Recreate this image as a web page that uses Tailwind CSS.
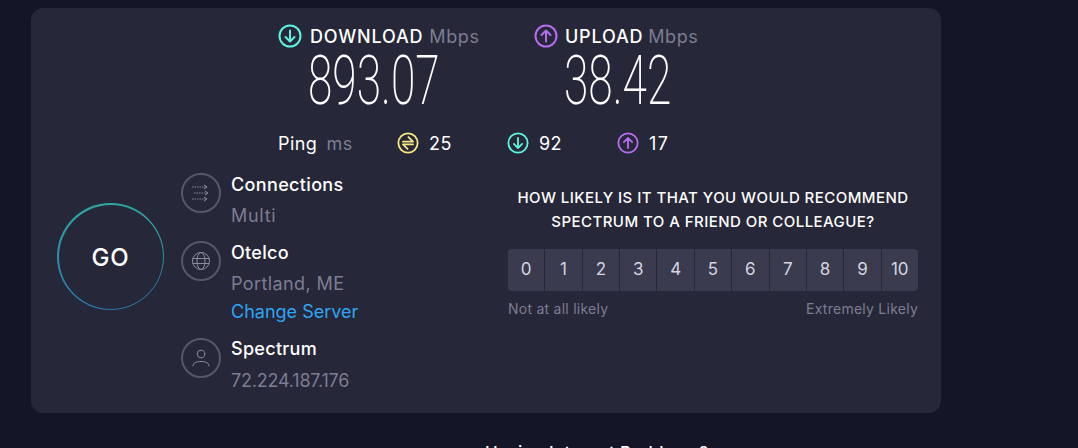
<!DOCTYPE html>
<html lang="en">
  <head>
    <meta charset="UTF-8" />
    <title>Speedtest Result</title>
    <script src="https://cdn.jsdelivr.net/npm/@tailwindcss/browser@4"></script>
  </head>
  <body class="bg-[#141526] h-[448px] overflow-hidden font-['Inter',sans-serif] text-white">
    <main class="w-[910px] h-[405px] ml-[31px] mt-[8px] absolute rounded-xl bg-[#262738]">
      <!-- top: speeds -->
      <section class="pl-[247px] pt-[16px]">
        <div class="flex">
          <div class="w-[256px]">
            <div class="flex items-center h-[24px] text-[18px] font-medium">
              <svg class="w-[24px] h-[24px] mr-[8px] text-[#5ef2e0]" viewBox="0 0 24 24" fill="none" stroke="currentColor" stroke-width="2" stroke-linecap="round" stroke-linejoin="round"><circle cx="12" cy="12" r="10.5" /><path d="M12 6.500v11M7.500 13l4.500 4.500 4.500-4.500" /></svg>
              <span class="tracking-[0.8px]">DOWNLOAD</span><span class="ml-[6px] font-normal tracking-[0.6px] text-[#7c7d92]">Mbps</span>
            </div>
            <div class="font-['Roboto',sans-serif] font-extralight text-[68px] leading-[60px] origin-left scale-x-[0.65] ml-[30px] mt-[3px]">893.07</div>
          </div>
          <div>
            <div class="flex items-center h-[24px] text-[18px] font-medium">
              <svg class="w-[24px] h-[24px] mr-[7px] text-[#b56cf0]" viewBox="0 0 24 24" fill="none" stroke="currentColor" stroke-width="2" stroke-linecap="round" stroke-linejoin="round"><circle cx="12" cy="12" r="10.5" /><path d="M12 17.500v-11M7.500 11L12 6.500l4.500 4.500" /></svg>
              <span class="tracking-[0.8px]">UPLOAD</span><span class="ml-[5px] font-normal tracking-[0.6px] text-[#7c7d92]">Mbps</span>
            </div>
            <div class="font-['Roboto',sans-serif] font-extralight text-[68px] leading-[60px] origin-left scale-x-[0.65] ml-[30px] mt-[3px]">38.42</div>
          </div>
        </div>
        <div class="flex items-center h-[24px] mt-[20px] text-[18px] tracking-[0.4px]">
          <div class="w-[119px]">Ping <span class="ml-[4px] text-[#7c7d92]">ms</span></div>
          <div class="w-[110px] flex items-center gap-[10px]">
            <svg class="w-[22px] h-[22px] text-[#f5e77f]" viewBox="0 0 24 24" fill="none" stroke="currentColor" stroke-width="2" stroke-linecap="round" stroke-linejoin="round"><circle cx="12" cy="12" r="10.5" /><path d="M6.500 10.500h11l-5-5M17.500 13.500h-11l5 5" /></svg>
            <span>25</span>
          </div>
          <div class="w-[110px] flex items-center gap-[10px]">
            <svg class="w-[22px] h-[22px] text-[#5ef2e0]" viewBox="0 0 24 24" fill="none" stroke="currentColor" stroke-width="2" stroke-linecap="round" stroke-linejoin="round"><circle cx="12" cy="12" r="10.5" /><path d="M12 6.500v11M7.500 13l4.500 4.500 4.500-4.500" /></svg>
            <span>92</span>
          </div>
          <div class="flex items-center gap-[10px]">
            <svg class="w-[22px] h-[22px] text-[#b56cf0]" viewBox="0 0 24 24" fill="none" stroke="currentColor" stroke-width="2" stroke-linecap="round" stroke-linejoin="round"><circle cx="12" cy="12" r="10.5" /><path d="M12 17.500v-11M7.500 11L12 6.500l4.500 4.500" /></svg>
            <span class="tracking-[1.5px]">17</span>
          </div>
        </div>
      </section>

      <!-- bottom: go, server info, survey -->
      <section class="flex mt-[18px]">
        <div class="ml-[26px] mt-[30px] w-[107px] h-[107px] rounded-full bg-linear-to-b from-[#2fa8a0] to-[#2a78b0] p-[1.5px]">
          <div class="w-full h-full rounded-full bg-[#262738] flex items-center justify-center pt-[2px] text-[24px] font-medium tracking-[0.8px]">GO</div>
        </div>
        <div class="ml-[17px] w-[327px]">
          <div class="flex gap-[10px] h-[68px]">
            <div class="w-[40px] h-[40px] rounded-full border-2 border-[#56576a] flex items-center justify-center">
              <svg class="w-[20px] h-[20px] text-[#8b8ca0]" viewBox="0 0 20 20" fill="none" stroke="currentColor" stroke-width="1"><path stroke-dasharray="1.5 1" d="M1 4h14M3 10h13M1 16h14" /><path d="M13 2l3 2-3 2M14 8l3 2-3 2M13 14l3 2-3 2" /></svg>
            </div>
            <div class="text-[18px] leading-[24px]">
              <div class="font-medium tracking-[0.35px]">Connections</div>
              <div class="mt-[7px] tracking-[0.7px] text-[#7c7d92]">Multi</div>
            </div>
          </div>
          <div class="flex gap-[10px] h-[97px]">
            <div class="w-[40px] h-[40px] rounded-full border-2 border-[#56576a] flex items-center justify-center">
              <svg class="w-[20px] h-[20px] text-[#8b8ca0]" viewBox="0 0 20 20" fill="none" stroke="currentColor" stroke-width="1"><circle cx="10" cy="10" r="8.5" /><ellipse cx="10" cy="10" rx="4" ry="8.5" /><path d="M1.500 7.500h17M1.500 12.500h17" /></svg>
            </div>
            <div class="text-[18px] leading-[24px]">
              <div class="font-medium tracking-[0.3px]">Otelco</div>
              <div class="mt-[7px] tracking-[0.4px] text-[#7c7d92]">Portland, ME</div>
              <div class="mt-[4px] text-[#2ea5f5]">Change Server</div>
            </div>
          </div>
          <div class="flex gap-[10px]">
            <div class="w-[40px] h-[40px] rounded-full border-2 border-[#56576a] flex items-center justify-center">
              <svg class="w-[20px] h-[20px] text-[#8b8ca0]" viewBox="0 0 20 20" fill="none" stroke="currentColor" stroke-width="1" stroke-linecap="round"><circle cx="10" cy="6" r="3.8" /><path d="M2 18c0-3 3-4.500 8-4.500s8 1.500 8 4.500" /></svg>
            </div>
            <div class="text-[18px] leading-[24px] -mt-[1px]">
              <div class="font-medium tracking-[0.3px]">Spectrum</div>
              <div class="mt-[8px] tracking-[-0.2px] text-[#7c7d92]">72.224.187.176</div>
            </div>
          </div>
        </div>
        <div class="mt-[13px] w-[410px]">
          <p class="text-[15px] font-medium leading-[24px] tracking-[0.45px] text-center whitespace-nowrap">HOW LIKELY IS IT THAT YOU WOULD RECOMMEND<br />SPECTRUM TO A FRIEND OR COLLEAGUE?</p>
          <div class="mt-[15px] flex h-[42px] rounded overflow-hidden gap-px text-[17px] text-[#d4d5e0]">
            <div class="flex-1 bg-[#3a3b4e] flex items-center justify-center">0</div>
            <div class="flex-1 bg-[#3a3b4e] flex items-center justify-center">1</div>
            <div class="flex-1 bg-[#3a3b4e] flex items-center justify-center">2</div>
            <div class="flex-1 bg-[#3a3b4e] flex items-center justify-center">3</div>
            <div class="flex-1 bg-[#3a3b4e] flex items-center justify-center">4</div>
            <div class="flex-1 bg-[#3a3b4e] flex items-center justify-center">5</div>
            <div class="flex-1 bg-[#3a3b4e] flex items-center justify-center">6</div>
            <div class="flex-1 bg-[#3a3b4e] flex items-center justify-center">7</div>
            <div class="flex-1 bg-[#3a3b4e] flex items-center justify-center">8</div>
            <div class="flex-1 bg-[#3a3b4e] flex items-center justify-center">9</div>
            <div class="flex-1 bg-[#3a3b4e] flex items-center justify-center">10</div>
          </div>
          <div class="flex justify-between mt-[9px] text-[14px] leading-[18px] tracking-[0.25px] text-[#7c7d92]">
            <span>Not at all likely</span>
            <span>Extremely Likely</span>
          </div>
        </div>
      </section>
    </main>
    <p class="absolute left-[485px] top-[441px] text-[17px] font-medium leading-[24px] tracking-[0.36px] whitespace-nowrap">Having Internet Problems?</p>
  </body>
</html>
